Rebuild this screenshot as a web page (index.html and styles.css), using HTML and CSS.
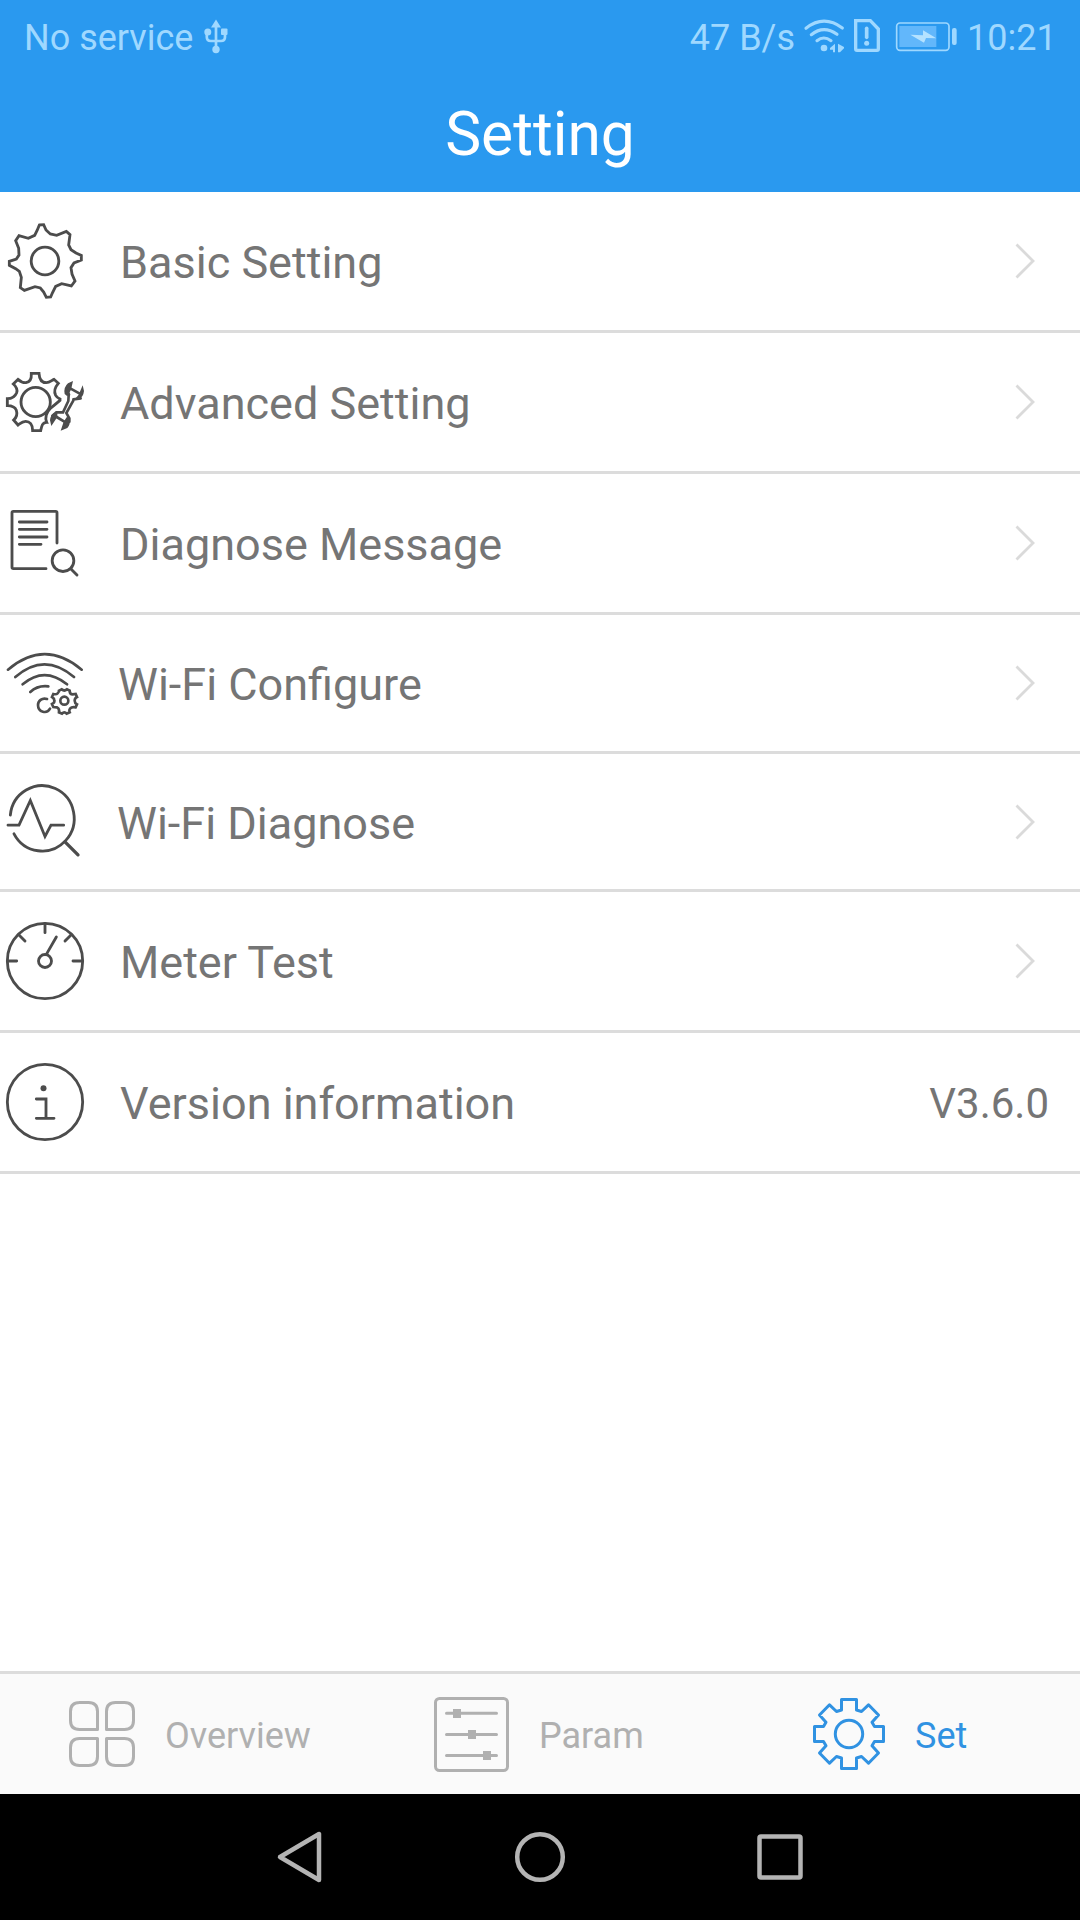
FILE: index.html
```html
<!DOCTYPE html>
<html lang="en">
<head>
<meta charset="utf-8">
<title>Setting</title>
<link rel="stylesheet" href="styles.css">
</head>
<body>
<div class="app">
  <header class="header">
    <div class="status">
      <span class="status-text">No service</span>
      <svg class="usb" width="24" height="36" viewBox="0 0 24 36"><path d="M12 6V30M2.800 13v5q0 4 4 4H17q4 0 4-4v-5" fill="none" stroke="currentColor" stroke-width="2.700"/><path d="M12 0.500l5 8H7z" fill="currentColor"/><circle cx="3.800" cy="13" r="3.500" fill="currentColor"/><rect x="17" y="9.500" width="6.500" height="6.500" rx="1" fill="currentColor"/><circle cx="12" cy="30.500" r="3.700" fill="currentColor"/></svg>
      <span class="status-text speed">47 B/s</span>
      <svg class="status-icons" width="160" height="60" viewBox="420 0 480 180">
        <g fill="none" stroke="currentColor" stroke-linecap="round">
          <path d="M438 85Q491 43 547 84M454 104Q491 74 531 103M471 122Q491 106 513 122" stroke-width="9.500"/>
          <path d="M587 62H631L655 87V147Q655 151 651 151H591Q587 151 587 147Z" stroke-width="10"/>
          <path d="M620 85V112" stroke-width="11"/>
          <rect x="710" y="69" width="157" height="82" rx="10" stroke-width="5"/>
        </g>
        <circle cx="492" cy="144" r="10" fill="currentColor"/>
        <path d="M525 131V157H519V149H510V144ZM534 131L552 141V145L540 157H534Z" fill="currentColor"/>
        <circle cx="620" cy="130" r="7.500" fill="currentColor"/>
        <rect x="718" y="78" width="111" height="63" fill="#62b7fb"/>
        <path d="M751 104L789 106V91L829 115L798 114L792 128Z" fill="#b5e2ff"/>
        <rect x="876" y="84" width="14" height="51" rx="6" fill="currentColor"/>
      </svg>
      <span class="status-text clock">10:21</span>
    </div>
    <h1 class="title">Setting</h1>
  </header>

  <main class="list">
    <div class="row">
      <svg class="icon" viewBox="0 48 270 270"><path d="M118 75L131 74L138 90L151 102L170 106L199 94L210 104L206 135L213 149L228 159L244 166V180L222 189L213 203L216 222L225 243L214 258L185 251L167 259L157 279L152 291L139 292L131 276L121 264L105 260L73 271L61 263L64 232L58 214L47 206L28 196V184L49 177L57 165L56 145L47 122L57 107L85 115L104 106L112 90Z"/><circle cx="135" cy="183" r="41.500"/></svg>
      <span class="label">Basic Setting</span>
      <svg class="chevron" viewBox="0 0 20 36"><path d="M1.500 1.500L18 18L1.500 34.500"/></svg>
    </div>
    <div class="row">
      <svg class="icon" viewBox="0 471 270 270"><path d="M94 520H117C118 538 125 548 139 548C149 548 155 541 162 538L175 550C161 566 163 578 167 586Q171 593 180 597V601C166 613 160 618 151 625C139 636 134 654 140 667C127 667 125 678 122 692H98C98 674 89 664 77 664C67 664 61 670 54 675L41 660C52 650 52 640 49 631C45 621 37 617 22 617V596C38 596 46 588 50 578C53 569 50 561 40 552L54 538C62 545 69 549 78 548C91 546 95 537 94 520Z"/><circle cx="107" cy="606" r="44"/><path d="M206 586L205 603L189 637H169L157 647M222 598L199 639L208 655V665M201 571L207 584M212 566L238 580M242 595L220 598M170 651L193 665M162 649L158 661" stroke-width="8"/><path d="M219 543L204 550Q190 562 194 582L202 589L213 569ZM248 556L252 573Q250 590 238 597L223 599L236 584ZM154 678L150 661Q151 647 161 640L172 637V651ZM182 692L202 684Q212 674 209 655L201 650L191 665Z" fill="#4c4c4c" stroke="none"/></svg>
      <span class="label">Advanced Setting</span>
      <svg class="chevron" viewBox="0 0 20 36"><path d="M1.500 1.500L18 18L1.500 34.500"/></svg>
    </div>
    <div class="row">
      <svg class="icon" viewBox="0 84 270 270"><path d="M171 219V128Q171 124 167 124H40Q36 124 36 128V292Q36 296 40 296H138M58 156H141M58 178H141M58 201H141M58 223H123"/><circle cx="189" cy="272" r="32.500"/><path d="M213 297L231 315"/></svg>
      <span class="label">Diagnose Message</span>
      <svg class="chevron" viewBox="0 0 20 36"><path d="M1.500 1.500L18 18L1.500 34.500"/></svg>
    </div>
    <div class="row row-wifi">
      <svg class="icon" viewBox="0 504 270 270"><path d="M24 599Q134 506 245 599M46 621Q133 545 222 621M68 643Q133 588 201 643M91 666Q113 645 145 649M141 687C126 682 114 693 114 705C114 727 141 733 150 716" stroke-width="8"/><path d="M185 658Q193 665 201 658L209 662Q209 673 218 673L227 672L231 681Q224 684 224 692Q224 699 231 703L227 712Q215 710 210 716Q206 721 209 727L200 731Q193 723 186 731L177 727Q179 716 171 712L160 711L156 702Q164 698 163 692Q163 685 156 681L160 672Q169 674 173 670Q178 666 177 662Z" stroke-width="8"/><circle cx="193" cy="692" r="12" stroke-width="8"/></svg>
      <span class="label">Wi-Fi Configure</span>
      <svg class="chevron" viewBox="0 0 20 36"><path d="M1.500 1.500L18 18L1.500 34.500"/></svg>
    </div>
    <div class="row row-wifi-diagnose">
      <svg class="icon" viewBox="0 109.500 270 270"><path d="M31 224A96 98 0 1 1 42 280M24 254H57L91 180L135 288L153 254H191"/><path d="M195 304L234 343" stroke-width="10"/></svg>
      <span class="label">Wi-Fi Diagnose</span>
      <svg class="chevron" viewBox="0 0 20 36"><path d="M1.500 1.500L18 18L1.500 34.500"/></svg>
    </div>
    <div class="row">
      <svg class="icon" viewBox="0 528 270 270"><circle cx="135" cy="663" r="113"/><circle cx="135" cy="663" r="19.500"/><path d="M135 550V578M24 663H50M219 663H246M57 585L75 603M213 585L195 603M139 643L169 591"/></svg>
      <span class="label">Meter Test</span>
      <svg class="chevron" viewBox="0 0 20 36"><path d="M1.500 1.500L18 18L1.500 34.500"/></svg>
    </div>
    <div class="row">
      <svg class="icon" viewBox="0 0 270 270"><circle cx="135" cy="135" r="113"/><circle cx="130.500" cy="94" r="9" fill="#4c4c4c" stroke="none"/><path d="M109 126H138V184M109 184H162"/></svg>
      <span class="label">Version information</span>
      <span class="version">V3.6.0</span>
    </div>
  </main>

  <nav class="tabs">
    <div class="tab tab-overview">
      <svg width="68" height="68" viewBox="68 40 68 68"><path d="M79 42.500H88.500Q97.500 42.500 97.500 51.500V69.500H79.500Q70.500 69.500 70.500 60.500V51.500Q70.500 42.500 79.500 42.500ZM115.500 42.500H124.500Q133.500 42.500 133.500 51.500V60.500Q133.500 69.500 124.500 69.500H106.500V51.500Q106.500 42.500 115.500 42.500ZM79.500 78.500H97.500V96.500Q97.500 105.500 88.500 105.500H79.500Q70.500 105.500 70.500 96.500V87.500Q70.500 78.500 79.500 78.500ZM106.500 78.500H124.500Q133.500 78.500 133.500 87.500V96.500Q133.500 105.500 124.500 105.500H115.500Q106.500 105.500 106.500 96.500Z"/></svg>
      <span class="tab-label">Overview</span>
    </div>
    <div class="tab tab-param">
      <svg width="75" height="75" viewBox="0 0 75 75"><rect x="1.500" y="1.500" width="72" height="72" rx="4"/><path d="M12.500 16.300H62.500M12.500 37.400H62.500M12.500 58.500H62.500"/><path d="M19 12h8v9h-8zM34 33h8v9h-8zM49 54h8v9h-8z" fill="currentColor" stroke="none"/></svg>
      <span class="tab-label">Param</span>
    </div>
    <div class="tab tab-set">
      <svg width="74" height="74" viewBox="-37 -37 74 74"><path d="M-7.500-34.500H7.500V-24L12.500-22.500L19.500-29.200L29.500-19L23-11.800L25.500-7.500H34.500V7.500H25.500L23 11.800L29.500 19L19.500 29.200L12.500 22.500L7.500 24V34.500H-7.500V24L-12.500 22.500L-19.500 29.200L-29.500 19L-23 11.800L-25.500 7.500H-34.500V-7.500H-25.500L-23-11.800L-29.500-19L-19.500-29.200L-12.500-22.500L-7.500-24Z"/><circle r="13.700"/></svg>
      <span class="tab-label">Set</span>
    </div>
  </nav>

  <div class="system-nav">
    <svg width="50" height="54" viewBox="275 1830 50 54"><path d="M319 1834V1880L280 1857Z"/></svg>
    <svg width="54" height="54" viewBox="-27 -27 54 54"><circle r="22.800"/></svg>
    <svg width="50" height="54" viewBox="-25 -27 50 54"><rect x="-20.500" y="-20.500" width="41" height="41" rx="1.500"/></svg>
  </div>
</div>
</body>
</html>
```

FILE: styles.css
```css
* { box-sizing: border-box; }

body {
  margin: 0;
  background: #fff;
  font-family: Roboto, "Liberation Sans", sans-serif;
}

.app {
  display: flex;
  flex-direction: column;
  width: 1080px;
  height: 1920px;
}

svg { display: block; flex: none; }

/* Header */
.header {
  height: 192px;
  background: #2a99ef;
}

.status {
  display: flex;
  height: 60px;
  padding: 0 27px 0 24px;
  color: #9fd8ff;
}

.status-text {
  font-size: 36px;
  line-height: 76px;
  white-space: nowrap;
}

.usb { margin: 19px 0 0 11px; }
.speed { margin-left: auto; }
.status-icons { margin-left: 5px; }
.clock { width: 86px; margin-left: 7px; }

.title {
  margin: 28px 0 0;
  color: #fff;
  font-size: 60.5px;
  font-weight: 400;
  line-height: 94px;
  text-align: center;
}

/* Settings list */
.list { flex: 1; }

.row {
  display: flex;
  align-items: center;
  height: 141px;
  padding-right: 45px;
  border-bottom: 3px solid #dcdcdc;
}

.row-wifi { height: 139px; }
.row-wifi-diagnose { height: 138px; }

.icon {
  width: 90px;
  height: 90px;
  fill: none;
  stroke: #4c4c4c;
  stroke-width: 8.5;
  stroke-linecap: round;
}

.label {
  flex: 1;
  padding: 3px 0 0 30px;
  color: #757575;
  font-size: 45px;
  line-height: 60px;
}

.row-wifi .label { padding-left: 28px; }
.row-wifi-diagnose .label { padding: 4px 0 0 27px; }

.chevron {
  width: 20px;
  height: 36px;
  fill: none;
  stroke: #dadada;
  stroke-width: 2.8;
}

.version {
  margin-right: -14px;
  padding-top: 3px;
  color: #757575;
  font-size: 42px;
  line-height: 60px;
}

/* Bottom tabs */
.tabs {
  display: grid;
  grid-template-columns: repeat(3, 1fr);
  height: 123px;
  border-top: 3px solid #dcdcdc;
  background: #fafafa;
}

.tab {
  display: flex;
  align-items: center;
  color: #b0b0b0;
  fill: none;
  stroke: currentColor;
  stroke-width: 3;
  stroke-linecap: round;
  stroke-linejoin: round;
}

.tab-label {
  padding-top: 3px;
  font-size: 36px;
  line-height: 48px;
}

.tab-overview { padding-left: 68px; gap: 29px; }
.tab-param { padding-left: 74px; gap: 30px; }
.tab-set { padding-left: 92px; gap: 29px; color: #3092e2; }

/* System navigation */
.system-nav {
  display: flex;
  justify-content: center;
  align-items: center;
  gap: 188px;
  height: 126px;
  background: #000;
  fill: none;
  stroke: #b4b4b4;
  stroke-width: 4.5;
  stroke-linejoin: round;
}
```
